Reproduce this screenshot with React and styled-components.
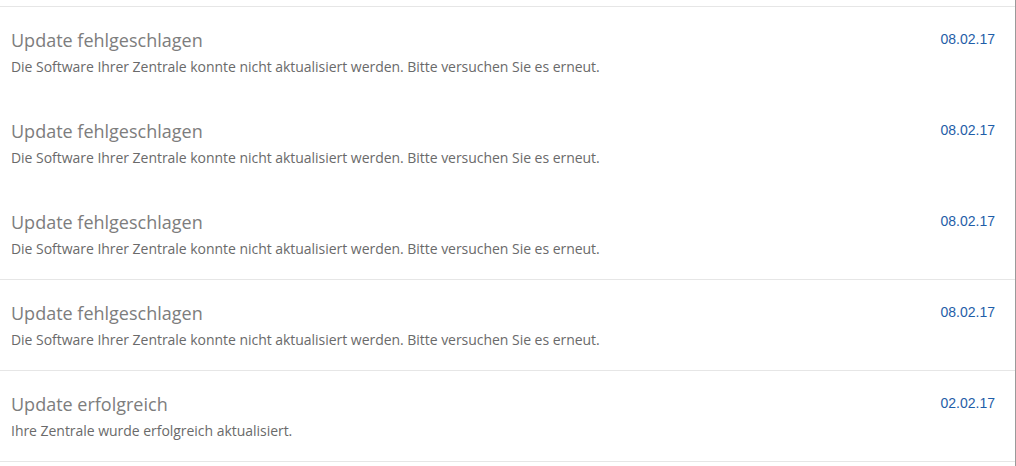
import React from "react";
import styled, { createGlobalStyle } from "styled-components";

const GlobalStyle = createGlobalStyle`
  html, body {
    margin: 0;
    padding: 0;
    background: #ffffff;
  }
`;

const Panel = styled.div`
  width: 1015px;
  height: 466px;
  border-right: 1px solid #9a9a9a;
  overflow: hidden;
  font-family: "Open Sans", sans-serif;
`;

const TopEdge = styled.div`
  height: 6px;
  border-bottom: 1px solid #e6e6e6;
`;

const Item = styled.div`
  display: flex;
  justify-content: space-between;
  align-items: flex-start;
  height: 90px;
  box-sizing: content-box;
  padding: 0 20px 0 11px;
  border-bottom: 1px solid ${(p) => (p.$divider ? "#e6e6e6" : "transparent")};
`;

const Texts = styled.div`
  display: flex;
  flex-direction: column;
  padding-top: 21px;
`;

const Title = styled.div`
  font-size: 18px;
  line-height: 24px;
  color: #7d7d7d;
`;

const Message = styled.div`
  margin-top: 5px;
  font-size: 14px;
  line-height: 20px;
  letter-spacing: -0.035px;
  color: #6a6a6a;
`;

const Date = styled.div`
  padding-top: 22px;
  font-family: "Liberation Sans", Arial, sans-serif;
  font-size: 14px;
  line-height: 20px;
  color: #1f5ea8;
`;

const failed = "Die Software Ihrer Zentrale konnte nicht aktualisiert werden. Bitte versuchen Sie es erneut.";

const items = [
  { title: "Update fehlgeschlagen", text: failed, date: "08.02.17", divider: false },
  { title: "Update fehlgeschlagen", text: failed, date: "08.02.17", divider: false },
  { title: "Update fehlgeschlagen", text: failed, date: "08.02.17", divider: true },
  { title: "Update fehlgeschlagen", text: failed, date: "08.02.17", divider: true },
  { title: "Update erfolgreich", text: "Ihre Zentrale wurde erfolgreich aktualisiert.", date: "02.02.17", divider: true },
];

export default function App() {
  return (
    <>
      <GlobalStyle />
      <Panel>
        <TopEdge />
        {items.map((it, i) => (
          <Item key={i} $divider={it.divider}>
            <Texts>
              <Title>{it.title}</Title>
              <Message>{it.text}</Message>
            </Texts>
            <Date>{it.date}</Date>
          </Item>
        ))}
      </Panel>
    </>
  );
}
